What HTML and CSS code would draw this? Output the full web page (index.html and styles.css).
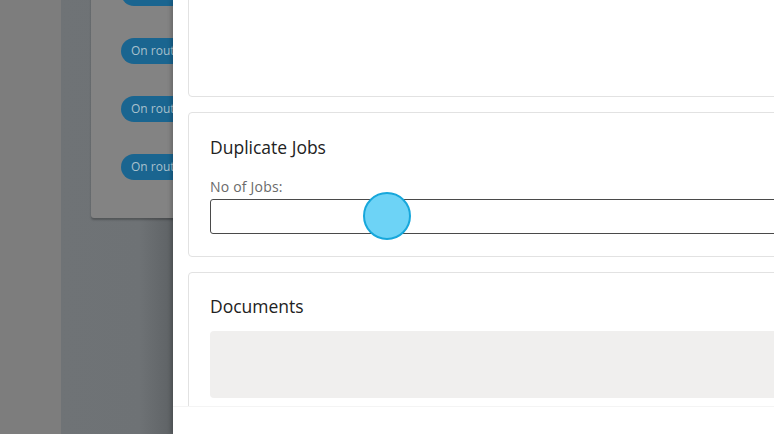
FILE: index.html
```html
<!DOCTYPE html>
<html>
<head>
<meta charset="utf-8">
<link rel="stylesheet" href="styles.css">
</head>
<body>
<div class="app">
  <div class="backdrop-left"></div>
  <div class="backdrop-mid">
    <div class="list-card">
      <div class="pill">On route</div>
      <div class="pill">On route</div>
      <div class="pill">On route</div>
      <div class="pill">On route</div>
    </div>
  </div>
  <div class="panel">
    <div class="card card-top"></div>
    <div class="card card-dup">
      <h2 class="card-title">Duplicate Jobs</h2>
      <label class="field-label">No of Jobs:</label>
      <div class="input"></div>
    </div>
    <div class="card card-docs">
      <h2 class="card-title">Documents</h2>
      <div class="docs-box"></div>
    </div>
    <div class="footer"></div>
  </div>
  <div class="cursor"></div>
</div>
</body>
</html>
```
FILE: styles.css
```css
html, body {
  margin: 0;
  padding: 0;
  width: 774px;
  height: 434px;
  overflow: hidden;
  font-family: "Open Sans", "Liberation Sans", sans-serif;
}
.app {
  position: relative;
  display: flex;
  width: 774px;
  height: 434px;
  overflow: hidden;
}
.backdrop-left {
  width: 61px;
  flex: none;
  background: #7d7d7d;
}
.backdrop-mid {
  width: 112px;
  flex: none;
  background: linear-gradient(to right, #6f7376 0%, #6e7275 70%, #5e6265 100%);
  overflow: hidden;
  padding-left: 30px;
  box-sizing: border-box;
}
.list-card {
  width: 120px;
  height: 238px;
  margin-top: -20px;
  background: #838383;
  border-radius: 3px;
  box-shadow: 0 2px 2px rgba(0,0,0,0.25);
  padding: 0 0 0 30px;
  box-sizing: border-box;
  display: flex;
  flex-direction: column;
  gap: 32px;
}
.pill {
  height: 26px;
  width: 72px;
  border-radius: 13px;
  background: #1a6590;
  color: #a9c1cd;
  font-size: 12px;
  line-height: 26px;
  padding-left: 10px;
  white-space: nowrap;
  flex: none;
}
.panel {
  position: relative;
  width: 700px;
  flex: none;
  background: #fff;
  padding-left: 15px;
  box-sizing: border-box;
  box-shadow: -2px 0 4px rgba(0,0,0,0.2);
}
.card {
  width: 640px;
  border: 1px solid #e2e2e2;
  border-radius: 4px;
  box-sizing: border-box;
  background: #fff;
  padding: 0 21px;
}
.card-top {
  height: 117px;
  margin-top: -20px;
}
.card-dup {
  margin-top: 15px;
  height: 145px;
  padding-top: 22px;
}
.card-docs {
  margin-top: 15px;
  height: 160px;
  padding-top: 21px;
}
.card-title {
  margin: 0;
  font-size: 17.5px;
  font-weight: 400;
  line-height: 24px;
  color: #222;
}
.field-label {
  display: block;
  margin-top: 20px;
  font-size: 14px;
  line-height: 16px;
  letter-spacing: 0.2px;
  color: #6a6a6a;
}
.input {
  margin-top: 4px;
  height: 35px;
  border: 1px solid #4a4a4a;
  border-radius: 3px;
  box-sizing: border-box;
}
.docs-box {
  margin-top: 13px;
  height: 67px;
  background: #f0efee;
  border-radius: 4px;
}
.footer {
  position: absolute;
  left: 0;
  right: 0;
  bottom: 0;
  height: 27px;
  background: #fff;
  border-top: 1px solid #f4f4f4;
}
.cursor {
  position: absolute;
  left: 363px;
  top: 192px;
  width: 48px;
  height: 48px;
  border-radius: 50%;
  background: #6dd3f6;
  border: 2px solid #17a7db;
  box-sizing: border-box;
}
```
